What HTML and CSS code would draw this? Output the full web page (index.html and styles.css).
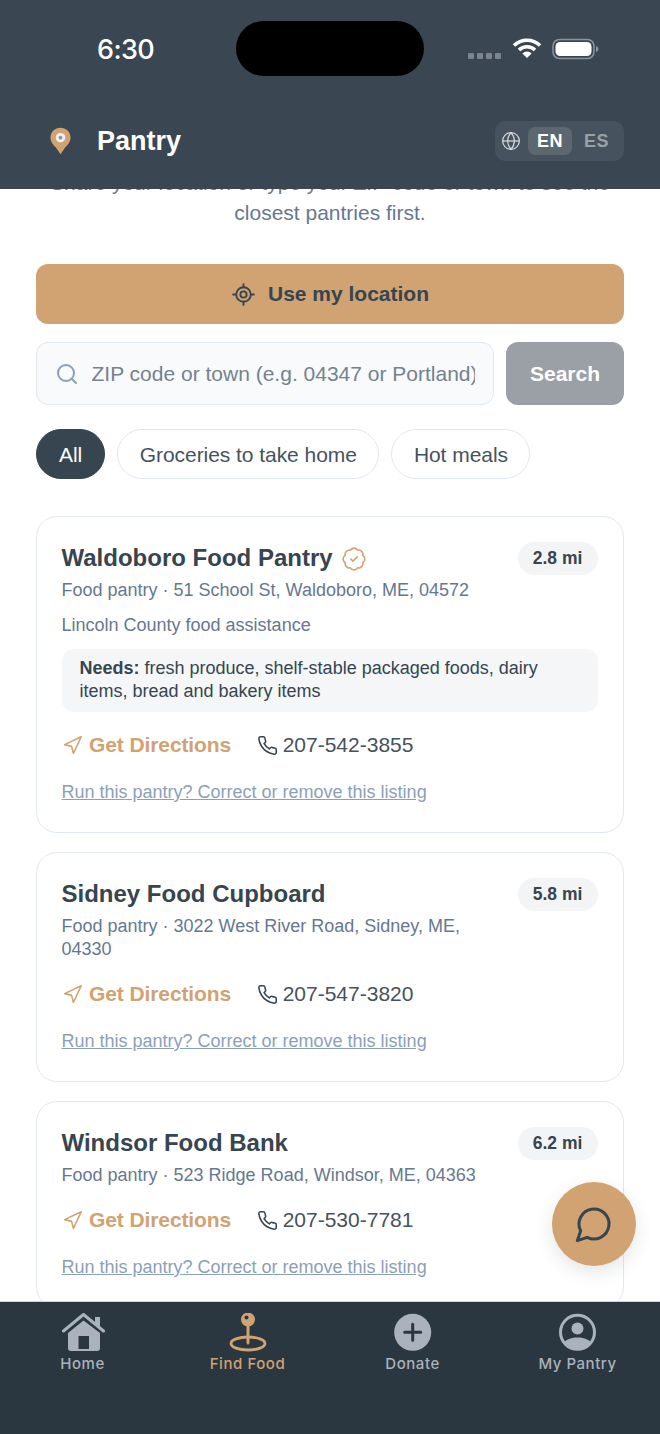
FILE: index.html
```html
<!DOCTYPE html>
<html lang="en">
<head>
<meta charset="utf-8">
<title>Pantry</title>
<link rel="stylesheet" href="styles.css">
</head>
<body>
<div class="app">
  <header class="top">
    <div class="status">
      <span class="time">6:30</span>
      <span class="island"></span>
      <div class="status-icons">
        <span class="dots"><i></i><i></i><i></i><i></i></span>
        <svg class="wifi" width="30" height="22" viewBox="0 0 30 22"><path d="M2 8.500a18.500 18.500 0 0 1 26 0" class="wifi-arc"/><path d="M7 13a11.500 11.500 0 0 1 16 0" class="wifi-arc"/><path d="M15 21l-4.600-4.600a6.500 6.500 0 0 1 9.200 0z" fill="#fff"/></svg>
        <svg width="48" height="24" viewBox="0 0 48 24"><rect x="1" y="2.500" width="41" height="19" rx="6.500" fill="none" stroke="#8b949c" stroke-width="1.500"/><rect x="3.500" y="5" width="36" height="14" rx="4.500" fill="#fff"/><path d="M44 9v6c1.600-.5 2.500-1.700 2.500-3S45.600 9.500 44 9z" fill="#8b949c"/></svg>
      </div>
    </div>
    <div class="brand-row">
      <div class="brand">
        <svg class="logo" width="21" height="28" viewBox="0 0 22 29"><path d="M11 .5C5 .5.500 5 .500 11c0 4.500 3 7.500 5.500 10l5 7.500 5-7.500c2.500-2.500 5.500-5.500 5.500-10C21.500 5 17 .5 11 .5z" fill="#d1a272"/><circle cx="11" cy="11" r="5" fill="#f1f1f1"/><circle cx="11" cy="11" r="2" fill="#8a97a5"/></svg>
        <span class="brand-name">Pantry</span>
      </div>
      <div class="lang">
        <svg class="ic-lang" width="20" height="20" viewBox="0 0 24 24"><circle cx="12" cy="12" r="10"/><path d="M2 12h20"/><path d="M12 2a15.300 15.300 0 0 1 4 10 15.300 15.300 0 0 1-4 10 15.300 15.300 0 0 1-4-10 15.300 15.300 0 0 1 4-10z"/></svg>
        <span class="lang-on">EN</span>
        <span class="lang-off">ES</span>
      </div>
    </div>
  </header>

  <main class="scroll">
    <p class="intro">Share your location or type your ZIP code or town to see the closest pantries first.</p>
    <button class="locate">
      <svg class="ic-locate" width="25" height="25" viewBox="0 0 24 24"><line x1="2" y1="12" x2="5" y2="12"/><line x1="19" y1="12" x2="22" y2="12"/><line x1="12" y1="2" x2="12" y2="5"/><line x1="12" y1="19" x2="12" y2="22"/><circle cx="12" cy="12" r="7"/><circle cx="12" cy="12" r="3"/></svg>
      Use my location
    </button>
    <form class="search">
      <label class="field">
        <svg class="ic-search" width="24" height="24" viewBox="0 0 24 24"><circle cx="11" cy="11" r="8"/><path d="m21 21-4.300-4.300"/></svg>
        <input class="field-input" type="text" placeholder="ZIP code or town (e.g. 04347 or Portland)">
      </label>
      <button class="search-btn" type="button">Search</button>
    </form>
    <div class="chips">
      <span class="chip chip-on">All</span>
      <span class="chip">Groceries to take home</span>
      <span class="chip">Hot meals</span>
    </div>

    <article class="card">
      <div class="card-head">
        <div class="card-info">
          <h2 class="card-title">Waldoboro Food Pantry
            <svg class="ic-badge" width="26" height="26" viewBox="0 0 24 24"><path d="M3.850 8.620a4 4 0 0 1 4.780-4.770 4 4 0 0 1 6.740 0 4 4 0 0 1 4.780 4.780 4 4 0 0 1 0 6.740 4 4 0 0 1-4.770 4.780 4 4 0 0 1-6.750 0 4 4 0 0 1-4.780-4.770 4 4 0 0 1 0-6.760Z"/><path d="m9 12 2 2 4-4"/></svg>
          </h2>
          <p class="card-addr">Food pantry · 51 School St, Waldoboro, ME, 04572</p>
        </div>
        <span class="dist">2.8 mi</span>
      </div>
      <p class="card-note">Lincoln County food assistance</p>
      <p class="needs"><b>Needs:</b> fresh produce, shelf-stable packaged foods, dairy items, bread and bakery items</p>
      <div class="actions">
        <a class="dir"><svg class="ic-dir" width="21" height="21" viewBox="0 0 24 24"><polygon points="3 11 22 2 13 21 11 13 3 11"/></svg>Get Directions</a>
        <a class="tel"><svg class="ic-tel" width="21" height="21" viewBox="0 0 24 24"><path d="M22 16.920v3a2 2 0 0 1-2.180 2 19.790 19.790 0 0 1-8.630-3.070 19.500 19.500 0 0 1-6-6 19.790 19.790 0 0 1-3.070-8.670A2 2 0 0 1 4.110 2h3a2 2 0 0 1 2 1.720 12.840 12.840 0 0 0 .7 2.810 2 2 0 0 1-.45 2.110L8.090 9.910a16 16 0 0 0 6 6l1.270-1.270a2 2 0 0 1 2.110-.45 12.840 12.840 0 0 0 2.810.7A2 2 0 0 1 22 16.92z"/></svg>207-542-3855</a>
      </div>
      <a class="claim">Run this pantry? Correct or remove this listing</a>
    </article>

    <article class="card">
      <div class="card-head">
        <div class="card-info">
          <h2 class="card-title">Sidney Food Cupboard</h2>
          <p class="card-addr">Food pantry · 3022 West River Road, Sidney, ME, 04330</p>
        </div>
        <span class="dist">5.8 mi</span>
      </div>
      <div class="actions">
        <a class="dir"><svg class="ic-dir" width="21" height="21" viewBox="0 0 24 24"><polygon points="3 11 22 2 13 21 11 13 3 11"/></svg>Get Directions</a>
        <a class="tel"><svg class="ic-tel" width="21" height="21" viewBox="0 0 24 24"><path d="M22 16.920v3a2 2 0 0 1-2.180 2 19.790 19.790 0 0 1-8.630-3.070 19.500 19.500 0 0 1-6-6 19.790 19.790 0 0 1-3.070-8.670A2 2 0 0 1 4.110 2h3a2 2 0 0 1 2 1.720 12.840 12.840 0 0 0 .7 2.810 2 2 0 0 1-.45 2.110L8.090 9.910a16 16 0 0 0 6 6l1.270-1.270a2 2 0 0 1 2.110-.45 12.840 12.840 0 0 0 2.810.7A2 2 0 0 1 22 16.92z"/></svg>207-547-3820</a>
      </div>
      <a class="claim">Run this pantry? Correct or remove this listing</a>
    </article>

    <article class="card">
      <div class="card-head">
        <div class="card-info">
          <h2 class="card-title">Windsor Food Bank</h2>
          <p class="card-addr">Food pantry · 523 Ridge Road, Windsor, ME, 04363</p>
        </div>
        <span class="dist">6.2 mi</span>
      </div>
      <div class="actions">
        <a class="dir"><svg class="ic-dir" width="21" height="21" viewBox="0 0 24 24"><polygon points="3 11 22 2 13 21 11 13 3 11"/></svg>Get Directions</a>
        <a class="tel"><svg class="ic-tel" width="21" height="21" viewBox="0 0 24 24"><path d="M22 16.920v3a2 2 0 0 1-2.180 2 19.790 19.790 0 0 1-8.630-3.070 19.500 19.500 0 0 1-6-6 19.790 19.790 0 0 1-3.070-8.670A2 2 0 0 1 4.110 2h3a2 2 0 0 1 2 1.720 12.840 12.840 0 0 0 .7 2.810 2 2 0 0 1-.45 2.110L8.090 9.910a16 16 0 0 0 6 6l1.270-1.270a2 2 0 0 1 2.110-.45 12.840 12.840 0 0 0 2.810.7A2 2 0 0 1 22 16.92z"/></svg>207-530-7781</a>
      </div>
      <a class="claim">Run this pantry? Correct or remove this listing</a>
    </article>

    <button class="fab" aria-label="Chat">
      <svg class="ic-chat" width="40" height="40" viewBox="0 0 24 24"><path d="M7.900 20A9 9 0 1 0 4 16.100L2 22Z"/></svg>
    </button>
  </main>

  <nav class="tabs">
    <a class="tab">
      <svg width="44" height="40" viewBox="0 0 44 40"><path d="M34 4h5v11l-5-4z" fill="#a9b2bd"/><path d="M2.500 18 22.500 1.500 42.500 18" fill="none" stroke="#a9b2bd" stroke-width="3" stroke-linecap="round" stroke-linejoin="round"/><path d="M7 20 22.500 7.500 39 20v15a3 3 0 0 1-3 3H10a3 3 0 0 1-3-3z" fill="#a9b2bd"/><rect x="17.500" y="23" width="10.500" height="13" fill="#2b3740"/></svg>
      <span>Home</span>
    </a>
    <a class="tab tab-on">
      <svg width="44" height="40" viewBox="0 0 44 40"><ellipse cx="22" cy="30.500" rx="17" ry="6.500" fill="none" stroke="#d1a272" stroke-width="2.800"/><path d="M20.500 8h3v22l-1.500 2-1.500-2z" fill="#d1a272"/><circle cx="22" cy="6.500" r="7" fill="#d1a272"/><circle cx="20.500" cy="4.500" r="2" fill="#2b3740"/></svg>
      <span>Find Food</span>
    </a>
    <a class="tab">
      <svg width="44" height="40" viewBox="0 0 44 40"><circle cx="21.700" cy="19.300" r="18.500" fill="#a9b2bd"/><path d="M21.700 11.300v16M13.700 19.300h16" stroke="#2b3740" stroke-width="3" stroke-linecap="round"/></svg>
      <span>Donate</span>
    </a>
    <a class="tab">
      <svg width="44" height="40" viewBox="0 0 44 40"><circle cx="21.500" cy="19.300" r="17" fill="none" stroke="#a9b2bd" stroke-width="3"/><circle cx="21.500" cy="15.500" r="6" fill="#a9b2bd"/><path d="M8 29.500c2.500-3.500 8-5 13.500-5s11 1.500 13.500 5a17 17 0 0 1-13.500 7 17 17 0 0 1-13.500-7z" fill="#a9b2bd"/></svg>
      <span>My Pantry</span>
    </a>
  </nav>
</div>
</body>
</html>
```

FILE: styles.css
```css
* { box-sizing: border-box; }
html, body { margin: 0; padding: 0; }
body { font-family: "Liberation Sans", Arial, sans-serif; color: #36454f; background: #fff; }
p, h2 { margin: 0; }
a { display: block; }

.app { width: 660px; height: 1434px; display: flex; flex-direction: column; overflow: hidden; }

.top { height: 189px; flex: none; background: #3a4652; color: #fff; }
.status { height: 97px; padding: 21px 36px 0 97px; display: grid; grid-template-columns: 139px 188px 1fr; align-items: start; }
.time { font: 500 27px/57px Inter, sans-serif; letter-spacing: -.6px; }
.island { height: 55px; background: #000; border-radius: 28px; }
.status-icons { display: flex; align-items: flex-start; justify-content: flex-end; gap: 10px; padding: 16px 24px 0 0; }
.dots { display: flex; gap: 3px; margin-top: 16px; margin-right: 1px; }
.dots i { width: 6px; height: 6px; border-radius: 1px; background: #7c858e; }
.wifi-arc { fill: none; stroke: #fff; stroke-width: 3.500; }

.brand-row { height: 88px; padding: 0 36px 0 50px; display: flex; align-items: center; justify-content: space-between; }
.brand { display: flex; align-items: center; gap: 26px; }
.brand-name { font-size: 27px; font-weight: 700; line-height: 34px; }
.lang { width: 129px; height: 40px; padding: 0 6px; display: flex; align-items: center; background: #46525d; border-radius: 10px; }
.ic-lang { fill: none; stroke: #d4d8dc; stroke-width: 1.500; flex: none; margin-right: 7px; }
.lang-on, .lang-off { font-size: 18px; font-weight: 700; letter-spacing: .5px; }
.lang-on { width: 44px; height: 28px; line-height: 28px; text-align: center; background: #5c6770; border-radius: 7px; color: #fff; }
.lang-off { flex: 1; padding-left: 3px; text-align: center; color: #98a0a8; }

.scroll { flex: 1; min-height: 0; position: relative; overflow: hidden; padding: 0 36px; background: #fff; border-bottom: 1px solid #cfd5dc; }
.intro { margin: -21px 0 36px; font-size: 21px; line-height: 30px; text-align: center; color: #66788f; }

.locate { width: 100%; height: 60px; display: flex; align-items: center; justify-content: center; gap: 12px; border: 0; border-radius: 12px; background: #d1a272; font: 700 21px "Liberation Sans", Arial, sans-serif; color: #36454f; }
.ic-locate { fill: none; stroke: #36454f; stroke-width: 1.800; stroke-linecap: round; }

.search { display: flex; gap: 12px; margin: 18px 0 24px; height: 63px; }
.field { flex: 1; min-width: 0; display: flex; align-items: center; gap: 12.500px; padding: 0 18px; background: #f8fafc; border: 1.500px solid #e2e8f0; border-radius: 12px; }
.ic-search { flex: none; fill: none; stroke: #8ba0b8; stroke-width: 2; stroke-linecap: round; stroke-linejoin: round; }
.field-input { flex: 1; min-width: 0; padding: 0; border: 0; outline: 0; background: none; font: 21px "Liberation Sans", Arial, sans-serif; }
.field-input::placeholder { color: #75828f; opacity: 1; }
.search-btn { width: 118px; flex: none; border: 0; border-radius: 12px; background: #9aa0a6; color: #fff; font: 700 21px "Liberation Sans", Arial, sans-serif; }

.chips { display: flex; gap: 12px; margin-bottom: 37px; }
.chip { height: 50px; padding: 1px 21.500px 0; display: flex; align-items: center; border: 1.500px solid #e2e8f0; border-radius: 25px; font-size: 21px; letter-spacing: -.05px; color: #46525d; background: #fff; }
.chip-on { padding: 1px 22px 0; background: #36454f; border-color: #36454f; color: #fff; }

.card { border: 1.500px solid #e2e8f0; border-radius: 21px; padding: 23px 25.500px 27.500px 24.500px; margin-bottom: 19.500px; background: #fff; }
.card-head { display: flex; justify-content: space-between; align-items: flex-start; gap: 12px; }
.card-info { flex: 1; min-width: 0; }
.card-title { display: flex; align-items: center; gap: 8px; font-size: 24px; line-height: 36px; font-weight: 700; color: #36454f; }
.ic-badge { margin-top: 2px; fill: none; stroke: #d1a272; stroke-width: 1.500; stroke-linecap: round; stroke-linejoin: round; }
.card-addr { margin-top: 3px; font-size: 18px; line-height: 23px; color: #66788f; }
.dist { flex: none; margin-top: 2px; width: 80px; height: 33px; line-height: 33px; text-align: center; border-radius: 17px; background: #f2f4f6; font-size: 17.500px; font-weight: 700; color: #36454f; }
.card-note { margin-top: 12px; font-size: 18px; line-height: 23px; color: #66788f; }
.needs { margin-top: 12px; padding: 8px 18px 9px; background: #f4f6f8; border-radius: 12px; font-size: 18px; line-height: 23px; color: #36454f; }

.actions { display: flex; align-items: center; gap: 25.500px; margin-top: 20px; height: 26px; font-size: 21px; }
.dir, .tel { display: flex; align-items: center; }
.dir { gap: 6.500px; font-weight: 700; letter-spacing: -.1px; color: #d1a272; }
.tel { gap: 5px; color: #46525d; }
.ic-dir { fill: none; stroke: #d1a272; stroke-width: 1.800; stroke-linecap: round; stroke-linejoin: round; }
.ic-tel { fill: none; stroke: #36454f; stroke-width: 1.800; stroke-linecap: round; stroke-linejoin: round; }
.claim { margin-top: 23px; font-size: 18px; line-height: 23px; color: #8ba0b8; text-decoration: underline; }

.fab { position: absolute; left: 552px; top: 993px; width: 84px; height: 84px; display: flex; align-items: center; justify-content: center; border: 0; border-radius: 50%; background: #d1a272; box-shadow: 0 6px 18px rgba(54, 69, 79, .14); }
.ic-chat { flex: none; fill: none; stroke: #36454f; stroke-width: 1.800; stroke-linecap: round; stroke-linejoin: round; }

.tabs { height: 132px; flex: none; display: grid; grid-template-columns: repeat(4, 165px); background: #2b3740; padding-top: 11px; }
.tab { display: flex; flex-direction: column; align-items: center; gap: 1px; height: 70px; }
.tab span { font: 500 15px/20px Inter, sans-serif; letter-spacing: .55px; color: #a9b2bd; }
.tab-on span { color: #d1a272; }
```
